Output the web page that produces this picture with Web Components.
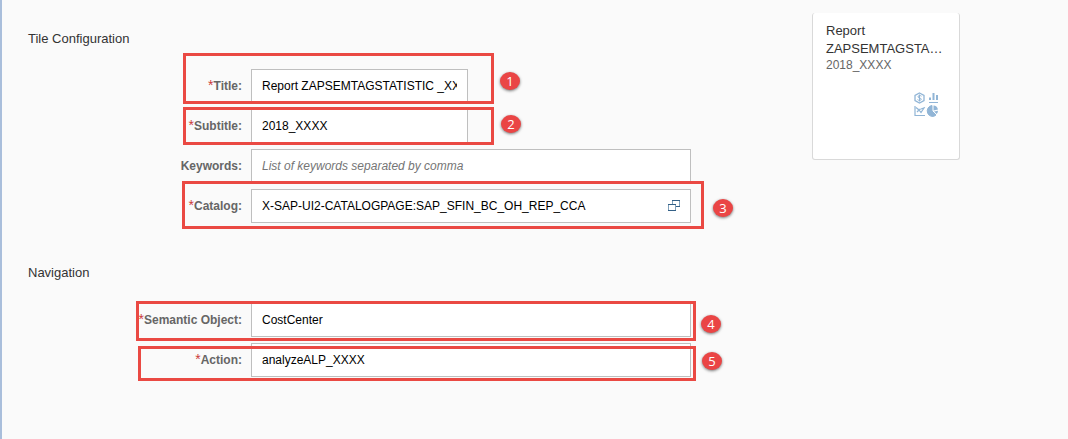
<!DOCTYPE html>
<html lang="en">
<head>
<meta charset="utf-8">
<title>Tile Configuration</title>
<style>
html, body { margin: 0; min-height: 100%; }
body { background: #fafafa; font: 12px/16px "Liberation Sans", Arial, sans-serif; color: #333; }
</style>
</head>
<body>
<config-page></config-page>
<script>
class BaseElement extends HTMLElement {
  render(html) {
    const t = document.createElement('template');
    t.innerHTML = html;
    this.attachShadow({ mode: 'open' }).append(t.content.cloneNode(true));
  }
}

// Red highlight frame with a numbered badge, laid over a form row.
class CalloutFrame extends BaseElement {
  connectedCallback() {
    this.render(`<style>
      :host { position: absolute; box-sizing: border-box; border: 3px solid #ea4943; pointer-events: none; }
      .badge { position: absolute; left: calc(100% + var(--gap, 9px)); top: var(--badge-top, 10px);
        width: 20px; height: 18px; border-radius: 50%; background: #ea4545; color: #fff;
        font: 13px/18px "Open Sans", sans-serif; text-align: center; box-shadow: 0 1px 3px #0008; }
    </style><span class="badge">${this.getAttribute('number')}</span>`);
  }
}

class FormField extends BaseElement {
  connectedCallback() {
    const a = n => this.getAttribute(n) || '';
    this.render(`<style>
      :host { display: grid; grid-template-columns: 214px minmax(0, 1fr); column-gap: 9px;
        align-items: center; height: 40px; position: relative; }
      label { text-align: right; font-weight: bold; color: #666; white-space: nowrap; }
      .req { color: #cc3b3b; font-weight: normal; font-size: 14px; line-height: 12px; }
      .box { display: flex; align-items: center; box-sizing: border-box; height: 34px;
        border: 1px solid #bfbfbf; background: #fff; padding: 0 10px; }
      :host([half]) .box { width: 217px; }
      input { flex: 1; min-width: 0; padding: 0; border: 0; outline: 0; background: none; font: inherit; color: #000; height: 24px; }
      input::placeholder { color: #757575; font-style: italic; opacity: 1; }
      button { display: flex; border: 0; padding: 0; background: none; }
      svg { display: block; }
    </style>
    <label for="f">${this.hasAttribute('required') ? '<span class="req">*</span>' : ''}${a('label')}:</label>
    <div class="box"><input id="f" type="text" value="${a('value')}" placeholder="${a('placeholder')}">
      ${this.hasAttribute('picker') ? `<button type="button" aria-label="Open value help">
        <svg width="12" height="12" viewBox="0 0 12 12" fill="none"><path d="M4.500 4V.5M11.500 0v7M.5 4v7M7.500 4v7" stroke="#7fa0bb"/><path d="M4 .5h8M8 6.500h4M0 4.500h8M0 10.500h8" stroke="#346187"/></svg></button>` : ''}
    </div><slot></slot>`);
  }
}

class FormSection extends BaseElement {
  connectedCallback() {
    this.render(`<style>
      :host { display: block; max-width: 663px; }
      h2 { margin: 0; font-size: 13px; font-weight: normal; line-height: 16px; color: #333; }
      .rows { padding-top: 19px; }
    </style><h2>${this.getAttribute('heading')}</h2><div class="rows"><slot></slot></div>`);
  }
}

class LaunchTile extends BaseElement {
  connectedCallback() {
    this.render(`<style>
      :host { display: flex; flex-direction: column; box-sizing: border-box; width: 148px; height: 147px;
        padding: 9px 13px; background: #fff; border: 1px solid #d9d9d9; border-top: 0; border-radius: 3px; }
      h3 { margin: 0; font-size: 13px; line-height: 18px; font-weight: normal; color: #333; }
      h3 span { display: block; white-space: nowrap; }
      p { margin: 0; line-height: 14px; color: #666; }
      svg { display: block; margin: 20px 7px 0 auto; }
    </style>
    <h3><span>Report</span><span>ZAPSEMTAGSTA…</span></h3><p>2018_XXXX</p>
    <svg width="25" height="26" viewBox="0 0 25 26" fill="none" stroke="#91b5d6">
      <path d="M5.500 1l4.500 2.500v5L5.500 11 1 8.500v-5z" stroke-width="1.300"/>
      <path d="M7.500 4.200C6 3 3.700 3.500 4 5s3.300.700 3.300 2.200S4.500 8.700 3.500 7.600M5.500 2.500v7"/>
      <path d="M15 10.500h9"/>
      <path d="M16 5.500v2.500M19.500 1v7M23 3v5" stroke-width="2"/>
      <path d="M1 14v9.500h10M2 15.500l2.500 2 2.500-.500 4-1.500M3 20l2-2 2 2.500 3-4.500" stroke-width="1.200"/>
      <path d="M18 13.500a5.200 5.500 0 1 0 4 9.500L18 19z" fill="#91b5d6"/>
      <path d="M19.500 13.500a5 5.500 0 0 1 4.500 4l-4.500 1zM20 19.500l4-.800a5 5 0 0 1-1.300 3.300z" fill="#91b5d6" stroke="none"/>
    </svg>`);
  }
}

class ConfigPage extends BaseElement {
  connectedCallback() {
    this.render(`<style>
      :host { display: flex; justify-content: space-between; gap: 24px; box-sizing: border-box; min-height: 100vh;
        padding: 31px 108px 20px 26px; background: #fafafa; border-left: 2px solid #a9bedb; }
      form { flex: 1; min-width: 0; display: grid; gap: 39px; align-content: start; }
      launch-tile { flex: none; margin-top: -18px; }
    </style>
    <form>
      <form-section heading="Tile Configuration">
        <form-field label="Title" value="Report ZAPSEMTAGSTATISTIC _XXXX" required half>
          <callout-frame number="1" style="inset:-13px 197px 2px 155px; --gap:9px; --badge-top:16px"></callout-frame></form-field>
        <form-field label="Subtitle" value="2018_XXXX" required half>
          <callout-frame number="2" style="inset:1px 197px 1px 155px; --gap:10px; --badge-top:5px"></callout-frame></form-field>
        <form-field label="Keywords" placeholder="List of keywords separated by comma"></form-field>
        <form-field label="Catalog" value="X-SAP-UI2-CATALOGPAGE:SAP_SFIN_BC_OH_REP_CCA" required picker>
          <callout-frame number="3" style="inset:-5px -13px -3px 154px; --gap:12px; --badge-top:15px"></callout-frame></form-field>
      </form-section>
      <form-section heading="Navigation">
        <form-field label="Semantic Object" value="CostCenter" required>
          <callout-frame number="4" style="inset:1px -5px -1px 108px; --gap:8px; --badge-top:11px"></callout-frame></form-field>
        <form-field label="Action" value="analyzeALP_XXXX" required>
          <callout-frame number="5" style="inset:6px -5px -1px 110px; --gap:9px; --badge-top:3px"></callout-frame></form-field>
      </form-section>
    </form>
    <launch-tile></launch-tile>`);
  }
}

customElements.define('callout-frame', CalloutFrame);
customElements.define('form-field', FormField);
customElements.define('form-section', FormSection);
customElements.define('launch-tile', LaunchTile);
customElements.define('config-page', ConfigPage);
</script>
</body>
</html>
